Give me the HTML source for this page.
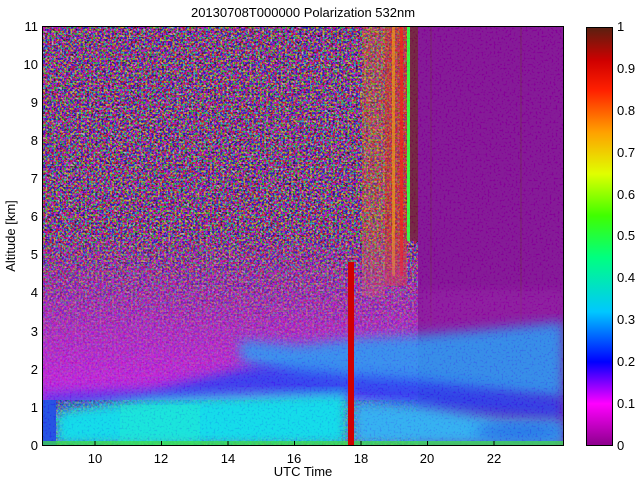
<!DOCTYPE html>
<html><head><meta charset="utf-8"><style>
html,body{margin:0;padding:0;background:#fff;width:640px;height:480px;overflow:hidden}
text{font-family:"Liberation Sans",sans-serif;font-size:13px;fill:#000}
</style></head><body>
<svg width="640" height="480" xmlns="http://www.w3.org/2000/svg">
<defs>
<filter id="nz" x="0" y="0" width="100%" height="100%">
<feTurbulence type="fractalNoise" baseFrequency="0.48" numOctaves="1" seed="3"/>
<feColorMatrix type="matrix" values="12 -4 0 0 -3.6  0 14 -6 0 -4.2  -4 0 12 0 -3.6  0 0 0 0 1"/>
</filter>
<filter id="nz2" x="0" y="0" width="100%" height="100%">
<feTurbulence type="fractalNoise" baseFrequency="0.5" numOctaves="1" seed="7"/>
<feColorMatrix type="matrix" values="0 0 0 0 0.1  0 5 0 0 -1.6  0 0 0 0 0.95  0 0 0 0 0.9"/>
</filter>
<filter id="bl"><feGaussianBlur stdDeviation="6"/></filter>
<linearGradient id="cb" x1="0" y1="1" x2="0" y2="0">
<stop offset="0" stop-color="#8c008c"/>
<stop offset="0.1" stop-color="#ff00ff"/>
<stop offset="0.2" stop-color="#0000ff"/>
<stop offset="0.32" stop-color="#00c8ff"/>
<stop offset="0.45" stop-color="#00ff80"/>
<stop offset="0.55" stop-color="#40ff00"/>
<stop offset="0.65" stop-color="#e0ff00"/>
<stop offset="0.75" stop-color="#ffa000"/>
<stop offset="0.85" stop-color="#ff2000"/>
<stop offset="0.92" stop-color="#d00000"/>
<stop offset="1" stop-color="#5a2010"/>
</linearGradient>
<linearGradient id="mg" x1="0" y1="0" x2="0" y2="1">
<stop offset="0" stop-color="#c020c0" stop-opacity="0"/>
<stop offset="0.6" stop-color="#c818d0" stop-opacity="0.7"/>
<stop offset="1" stop-color="#d810e8" stop-opacity="0.9"/>
</linearGradient>
<clipPath id="pc"><rect x="42" y="26" width="522" height="420"/></clipPath>
</defs>
<text x="303" y="17" text-anchor="middle">20130708T000000 Polarization 532nm</text>
<g clip-path="url(#pc)">
<rect x="42" y="26" width="376" height="420" fill="#7a1050"/>
<rect x="42" y="26" width="376" height="420" filter="url(#nz)" opacity="0.6"/>
<rect x="418" y="26" width="146" height="420" fill="#8b008b"/>
<!-- stripes -->
<rect x="362" y="26" width="23" height="270" fill="#ff7000" opacity="0.3"/>
<rect x="385" y="26" width="22" height="260" fill="#f03000" opacity="0.55"/>
<rect x="392" y="26" width="3" height="250" fill="#ff9000" opacity="0.7"/>
<rect x="400" y="26" width="3" height="250" fill="#ff1000" opacity="0.8"/>
<rect x="407" y="26" width="3" height="215" fill="#30ff30"/>
<rect x="410" y="26" width="8" height="215" fill="#7a1030"/>
<rect x="430" y="26" width="2" height="300" fill="#7a1050" opacity="0.5"/>
<rect x="520" y="26" width="2" height="300" fill="#7a1050" opacity="0.5"/>
<!-- magenta lower -->
<rect x="42" y="230" width="376" height="170" fill="url(#mg)"/>
<polygon points="418,290 564,290 564,330 418,340" fill="#a010a0" opacity="0.5" filter="url(#bl)"/>
<!-- light blue upper layer -->
<polygon points="240,340 300,345 360,338 420,335 480,330 564,322 564,400 400,390 300,380 240,360" fill="#2a90f0" opacity="0.9" filter="url(#bl)"/>
<!-- dark blue band -->
<polygon points="42,395 150,390 260,365 350,375 420,380 500,390 564,398 564,420 480,415 400,410 350,400 250,395 150,400 42,405" fill="#2030f0" opacity="0.85" filter="url(#bl)"/>
<!-- cyan bottom left -->
<polygon points="55,410 150,398 250,395 348,392 348,446 55,446" fill="#10d8e8" filter="url(#bl)"/>
<rect x="120" y="405" width="80" height="41" fill="#20f0c0" opacity="0.4"/>
<!-- bottom right -->
<polygon points="352,400 420,405 500,418 564,420 564,446 352,446" fill="#30a8f0" filter="url(#bl)"/>
<ellipse cx="520" cy="432" rx="45" ry="9" fill="#2050e0" opacity="0.7" filter="url(#bl)"/>
<rect x="42" y="400" width="14" height="46" fill="#2040e0"/>
<rect x="42" y="26" width="522" height="420" filter="url(#nz2)" opacity="0.12"/>
<rect x="42" y="441" width="522" height="5" fill="#40e040" opacity="0.7"/>
<rect x="348" y="262" width="6" height="184" fill="#d00000"/>
</g>
<rect x="42.5" y="26.5" width="521" height="419" fill="none" stroke="#000" stroke-width="1"/>
<g stroke="#000" stroke-width="1">
<line x1="95" y1="446" x2="95" y2="441"/><line x1="161.5" y1="446" x2="161.5" y2="441"/><line x1="228" y1="446" x2="228" y2="441"/><line x1="294.5" y1="446" x2="294.5" y2="441"/><line x1="361" y1="446" x2="361" y2="441"/><line x1="427.5" y1="446" x2="427.5" y2="441"/><line x1="494" y1="446" x2="494" y2="441"/>
</g>
<g text-anchor="middle">
<text x="95" y="463">10</text><text x="161" y="463">12</text><text x="228" y="463">14</text><text x="294" y="463">16</text><text x="361" y="463">18</text><text x="427" y="463">20</text><text x="494" y="463">22</text>
<text x="303" y="476">UTC Time</text>
</g>
<g text-anchor="end">
<text x="38" y="450">0</text><text x="38" y="412">1</text><text x="38" y="374">2</text><text x="38" y="336">3</text><text x="38" y="297">4</text><text x="38" y="259">5</text><text x="38" y="221">6</text><text x="38" y="183">7</text><text x="38" y="145">8</text><text x="38" y="107">9</text><text x="38" y="69">10</text><text x="38" y="31">11</text>
</g>
<text transform="translate(15,236) rotate(-90)" text-anchor="middle">Altitude [km]</text>
<rect x="586.5" y="27.5" width="26" height="418" fill="url(#cb)" stroke="#000" stroke-width="1"/>
<g>
<text x="617" y="450">0</text><text x="617" y="408">0.1</text><text x="617" y="366">0.2</text><text x="617" y="324">0.3</text><text x="617" y="282">0.4</text><text x="617" y="240">0.5</text><text x="617" y="199">0.6</text><text x="617" y="157">0.7</text><text x="617" y="115">0.8</text><text x="617" y="73">0.9</text><text x="617" y="31">1</text>
</g>
</svg>
</body></html>
